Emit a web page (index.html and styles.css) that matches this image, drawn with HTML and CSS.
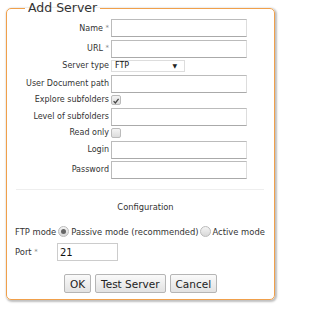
FILE: index.html
```html
<!DOCTYPE html>
<html>
<head>
<meta charset="utf-8">
<link rel="stylesheet" href="styles.css">
</head>
<body>
<fieldset class="dialog">
  <legend class="title">Add Server</legend>
  <div class="form">
    <label class="lbl">Name <span class="req">*</span></label>
    <input class="txt" type="text">
    <label class="lbl">URL <span class="req">*</span></label>
    <input class="txt" type="text">
    <label class="lbl">Server type</label>
    <div class="select"><span>FTP</span><span class="arrow">▼</span></div>
    <label class="lbl">User Document path</label>
    <input class="txt" type="text">
    <label class="lbl">Explore subfolders</label>
    <div class="cb checked"><svg viewBox="0 0 10 10" width="10" height="10"><path d="M2 5.2 L4.2 7.4 L8.2 2.4" fill="none" stroke="#444" stroke-width="1.6"/></svg></div>
    <label class="lbl">Level of subfolders</label>
    <input class="txt" type="text">
    <label class="lbl">Read only</label>
    <div class="cb"></div>
    <label class="lbl">Login</label>
    <input class="txt" type="text">
    <label class="lbl">Password</label>
    <input class="txt" type="password">
  </div>
  <hr class="sep">
  <div class="config">Configuration</div>
  <div class="mode">
    <span class="mlbl">FTP mode</span>
    <span class="radio on"></span><span>Passive mode (recommended)</span>
    <span class="radio"></span><span>Active mode</span>
  </div>
  <div class="port">
    <span class="plbl">Port <span class="req">*</span></span>
    <input class="ptxt" type="text" value="21">
  </div>
  <div class="buttons">
    <button class="btn">OK</button>
    <button class="btn">Test Server</button>
    <button class="btn">Cancel</button>
  </div>
</fieldset>
</body>
</html>
```
FILE: styles.css
```css
html, body { margin: 0; padding: 0; background: #fff; }
body {
  font-family: "DejaVu Sans", Verdana, sans-serif;
  font-size: 8px;
  line-height: 10px;
  color: #333;
  width: 281px;
  height: 309px;
  overflow: hidden;
}
.dialog {
  margin: 2px 0 0 6px;
  width: 269px;
  height: 298px;
  box-sizing: border-box;
  border: 1px solid #f0a04b;
  border-radius: 5px;
  box-shadow: 1px 1px 2px 1px rgba(0,0,0,0.25);
  padding: 4px 8px 0 8px;
}
.title {
  font-size: 12.5px;
  line-height: 12px;
  color: #333;
  padding: 0 3px;
  margin-left: 10px;
}
.form {
  display: grid;
  grid-template-columns: 94px 136px;
  grid-template-rows: 18px 18px 12px 18px 10px 18px 10px 18px 18px;
  column-gap: 2px;
  row-gap: 2.5px;
  align-items: center;
  margin-top: 1px;
}
.lbl { text-align: right; white-space: nowrap; }
.req { color: #888; font-size: 7px; vertical-align: 1px; }
.txt {
  height: 18px;
  box-sizing: border-box;
  border: 1px solid #bbb;
  border-bottom-color: #aaa;
  border-right-color: #ddd;
  margin: 0;
  padding: 0 2px;
  font: inherit;
}
.select {
  width: 74px;
  height: 12px;
  box-sizing: border-box;
  border: 1px solid #ddd;
  display: flex;
  align-items: center;
  justify-content: space-between;
  padding: 0 7px 0 3px;
  color: #111;
}
.arrow { font-size: 6px; color: #222; }
.cb {
  width: 10px;
  height: 10px;
  box-sizing: border-box;
  border: 1px solid #bbb;
  border-radius: 2px;
  background: linear-gradient(#f4f4f4, #dcdcdc);
  display: flex;
}
.cb svg { display: block; }
.sep {
  border: 0;
  border-top: 1px solid #eee;
  margin: 10px 2px 0 1px;
}
.config {
  text-align: center;
  margin-top: 12px;
  padding-left: 10px;
  font-size: 8.3px;
}
.mode {
  display: flex;
  align-items: center;
  margin-top: 14px;
  white-space: nowrap;
  font-size: 8.4px;
  height: 11px;
}
.mlbl { margin-right: 1px; }
.radio {
  width: 11px;
  height: 11px;
  box-sizing: border-box;
  border: 1px solid #bbb;
  border-radius: 50%;
  background: linear-gradient(#f4f4f4, #d8d8d8);
  margin: 0 2px 0 1px;
  position: relative;
}
.radio.on::after {
  content: "";
  position: absolute;
  left: 2px; top: 2px;
  width: 5px; height: 5px;
  border-radius: 50%;
  background: #666;
}
.port {
  display: flex;
  align-items: center;
  margin-top: 6px;
  font-size: 8.4px;
}
.plbl { width: 42px; }
.ptxt {
  width: 61px;
  height: 18px;
  box-sizing: border-box;
  border: 1px solid #ccc;
  margin: 0;
  padding: 0 2px;
  font: inherit;
  font-size: 10px;
  color: #111;
}
.buttons {
  display: flex;
  justify-content: center;
  gap: 4px;
  margin-top: 13px;
  padding-left: 0;
}
.btn {
  height: 19px;
  box-sizing: border-box;
  border: 1px solid #b5b5b5;
  border-radius: 2px;
  background: linear-gradient(#fafafa, #e2e2e2);
  font-family: "DejaVu Sans", Verdana, sans-serif;
  font-size: 10.5px;
  color: #222;
  padding: 0 5px;
  margin: 0;
}
```
